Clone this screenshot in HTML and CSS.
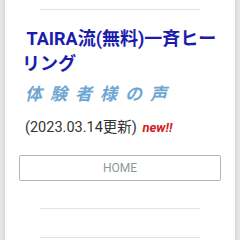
FILE: index.html
```html
<!DOCTYPE html>
<html>
   <head>
      <title>TAIRA流(無料)一斉ヒーリング</title>
      <meta charset="utf-8">
      <meta name="viewport" content="width=device-width, initial-scale=1.0">
      <link rel="stylesheet" href="styles.css">
   </head>
   <body>
      <div class="page">
         <hr class="rule rule-top" />
         <h1 class="title">&nbsp;TAIRA流(無料)一斉ヒーリング</h1>
         <h2 class="voice">体験者様の声</h2>
         <p class="update">(2023.03.14更新) <span class="new">new!!</span></p>
         <a class="home" href="#">HOME</a>
         <hr class="rule rule-mid" />
         <hr class="rule rule-low" />
      </div>
   </body>
</html>
```

FILE: styles.css
```css
body {
   margin: 0;
   background-color: #e6e6e6;
   font-family: Roboto, "Noto Sans CJK JP", sans-serif;
}

.page {
   margin: 0 5px;
   min-height: 240px;
   padding: 9px 14px 0 14px;
   background-color: #ffffff;
   box-shadow: 0 0 4px rgba(0, 0, 0, 0.15);
}

.rule {
   margin: 0 21px;
   border: none;
   border-top: 1px solid #e2e2e2;
}

.title {
   margin: 16px -8px 0 3px;
   font-size: 18px;
   line-height: 25px;
   font-weight: bold;
   color: #1c1cac;
}

.voice {
   margin: 7px 0 0 6px;
   font-size: 17px;
   line-height: 22px;
   font-style: italic;
   font-weight: bold;
   letter-spacing: 8px;
   color: #6ea6d2;
}

.update {
   margin: 14px 0 0 6px;
   font-size: 14.5px;
   line-height: 18px;
   color: #333333;
}

.new {
   margin-left: 2px;
   font-size: 13px;
   font-weight: bold;
   font-style: italic;
   color: #d01c1c;
}

.home {
   display: block;
   margin-top: 18px;
   height: 24px;
   line-height: 24px;
   border: 1px solid #b0b8b8;
   border-radius: 2px;
   text-align: center;
   font-size: 12px;
   color: #8e9a9a;
   text-decoration: none;
}

.rule-mid {
   margin-top: 27px;
}

.rule-low {
   margin-top: 28px;
}
```
